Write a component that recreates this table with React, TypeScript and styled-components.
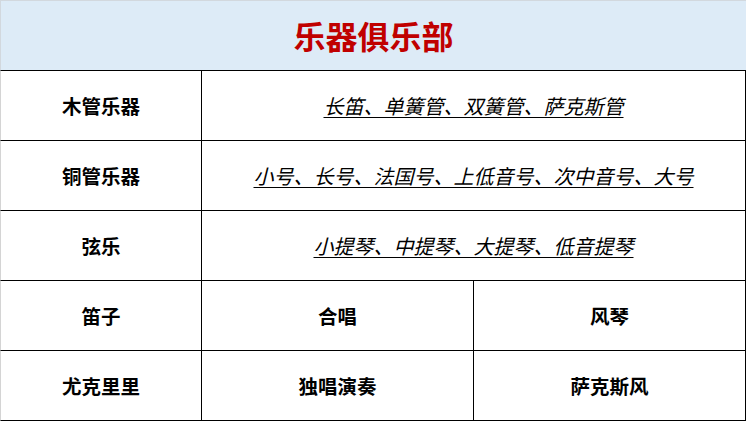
import React from "react";
import styled, { createGlobalStyle } from "styled-components";

const Global = createGlobalStyle`
  html, body { margin: 0; padding: 0; background: #ffffff; }
  body { font-family: "Noto Sans CJK SC", "Noto Sans", sans-serif; }
`;

const Table = styled.div`
  width: 746px;
  display: grid;
  grid-template-columns: 202px 272px 272px;
  grid-template-rows: 71px repeat(5, 70px);
  box-sizing: border-box;
`;

const Title = styled.div`
  grid-column: 1 / span 3;
  background: #ddebf7;
  border-top: 1px solid #d2d8de;
  border-left: 1px solid #d2d8de;
  border-bottom: 1px solid #000;
  box-sizing: border-box;
  display: flex;
  align-items: center;
  justify-content: center;
  padding-bottom: 2px;
  color: #c00000;
  font-size: 32px;
  font-weight: 700;
`;

const Cell = styled.div<{ $span?: number; $first?: boolean }>`
  grid-column: span ${(p) => p.$span ?? 1};
  box-sizing: border-box;
  border-right: 1px solid #000;
  border-bottom: 1px solid #000;
  ${(p) => (p.$first ? "border-left: 1px solid #d4d4d4;" : "")}
  display: flex;
  align-items: center;
  justify-content: center;
  font-size: 19.5px;
  color: #000;
`;

const Label = styled.span`
  font-weight: 700;
`;

const List = styled.span`
  font-style: italic;
  font-weight: 400;
  font-size: 20px;
  text-decoration: underline;
  text-underline-offset: 3px;
  text-decoration-thickness: 1px;
`;

type Row =
  | { label: string; list: string }
  | { label: string; cells: [string, string] };

const rows: Row[] = [
  { label: "木管乐器", list: "长笛、单簧管、双簧管、萨克斯管" },
  { label: "铜管乐器", list: "小号、长号、法国号、上低音号、次中音号、大号" },
  { label: "弦乐", list: "小提琴、中提琴、大提琴、低音提琴" },
  { label: "笛子", cells: ["合唱", "风琴"] },
  { label: "尤克里里", cells: ["独唱演奏", "萨克斯风"] },
];

export default function App() {
  return (
    <>
      <Global />
      <Table>
        <Title>乐器俱乐部</Title>
        {rows.map((r) => (
          <React.Fragment key={r.label}>
            <Cell $first>
              <Label>{r.label}</Label>
            </Cell>
            {"list" in r ? (
              <Cell $span={2}>
                <List>{r.list}</List>
              </Cell>
            ) : (
              r.cells.map((c) => (
                <Cell key={c}>
                  <Label>{c}</Label>
                </Cell>
              ))
            )}
          </React.Fragment>
        ))}
      </Table>
    </>
  );
}
